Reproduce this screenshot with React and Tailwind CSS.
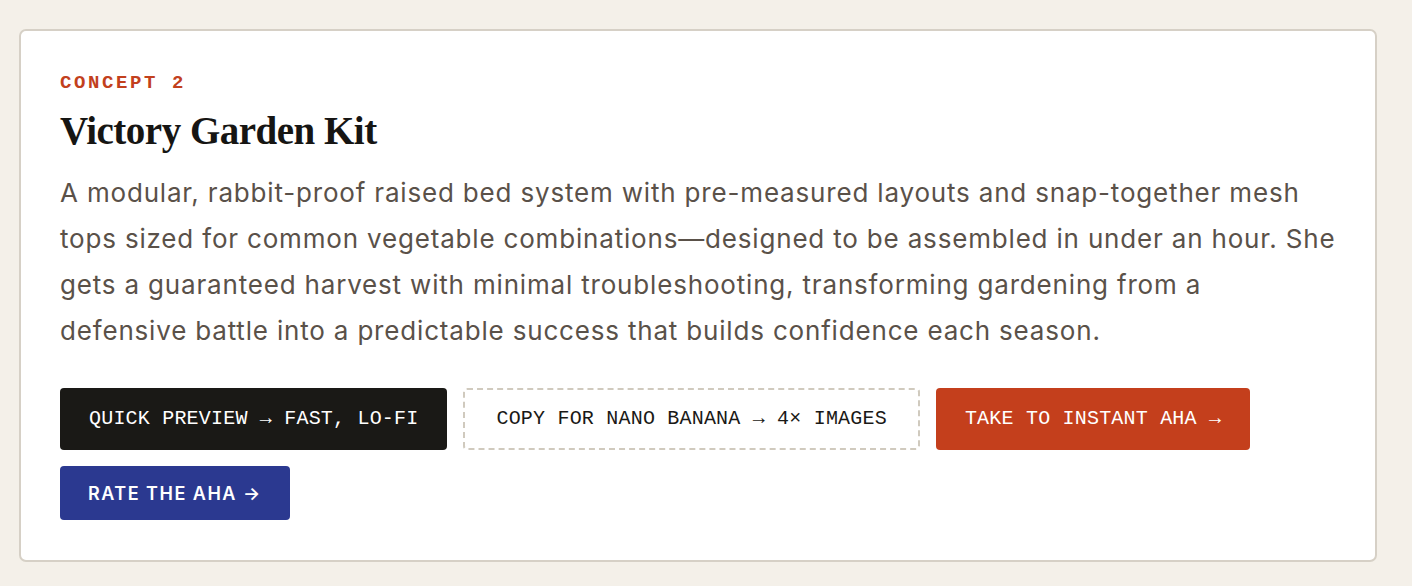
import React from "react";

const monoBtn =
  "h-[62px] rounded-[4px] font-['Liberation_Mono','DejaVu_Sans_Mono',monospace] text-[20px] tracking-[0.2px]";

export default function App() {
  return (
    <div className="min-h-[586px] w-[1412px] bg-[#f4f0e9] pt-[29px] pl-[19px]">
      <div className="w-[1358px] rounded-[7px] border-2 border-[#d6d0c6] bg-white px-[39px] pt-[38px] pb-[40px]">
        {/* Label */}
        <div className="font-['Liberation_Mono','DejaVu_Sans_Mono',monospace] text-[19px] font-bold leading-[28px] tracking-[2.6px] text-[#c2401d]">
          CONCEPT 2
        </div>

        {/* Title */}
        <h2 className="mt-[10px] font-['Liberation_Serif','DejaVu_Serif',serif] text-[39px] font-bold leading-[48px] tracking-[-0.5px] text-[#161513]">
          Victory Garden Kit
        </h2>

        {/* Description */}
        <p className="mt-[15px] whitespace-nowrap font-[Inter,'Noto_Sans',sans-serif] text-[26px] leading-[46px] tracking-[0.82px] text-[#5a5149]">
          A modular, rabbit-proof raised bed system with pre-measured layouts and snap-together mesh
          <br />
          tops sized for common vegetable combinations—designed to be assembled in under an hour. She
          <br />
          gets a guaranteed harvest with minimal troubleshooting, transforming gardening from a
          <br />
          defensive battle into a predictable success that builds confidence each season.
        </p>

        {/* Actions */}
        <div className="mt-[34px] flex flex-wrap gap-4">
          <button className={`${monoBtn} bg-[#1a1916] px-[29px] text-white`}>
            QUICK PREVIEW → FAST, LO-FI
          </button>
          <button className={`${monoBtn} border-2 border-dashed border-[#d0cabe] bg-white px-[31px] text-[#1a1916]`}>
            COPY FOR NANO BANANA → 4× IMAGES
          </button>
          <button className={`${monoBtn} bg-[#c43f1c] px-[29px] text-white`}>
            TAKE TO INSTANT AHA →
          </button>
        </div>
        <div className="mt-4 flex">
          <button className="h-[54px] rounded-[4px] bg-[#2b3990] px-[28px] font-[Inter,'Noto_Sans',sans-serif] text-[18px] font-semibold tracking-[1.5px] text-white">
            RATE THE AHA →
          </button>
        </div>
      </div>
    </div>
  );
}
